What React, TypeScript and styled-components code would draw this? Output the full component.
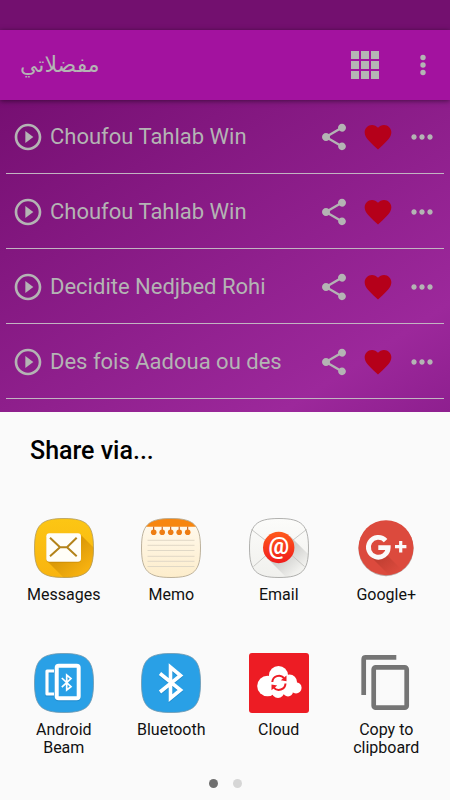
import React from "react";
import styled, { createGlobalStyle } from "styled-components";

const GlobalStyle = createGlobalStyle`
  *, *::before, *::after { box-sizing: border-box; }
  body {
    margin: 0;
    background: #fafafa;
    font-family: Roboto, "Liberation Sans", sans-serif;
  }
`;

const Page = styled.div`
  display: flex;
  flex-direction: column;
  min-height: 100vh;
`;

const StatusBar = styled.div`
  height: 30px;
  background: #73106f;
`;

const AppBar = styled.header`
  position: relative;
  z-index: 1;
  display: flex;
  align-items: center;
  height: 70px;
  padding: 0 6px 0 20px;
  background: #a3129f;
  color: #b4b4b4;
  box-shadow: 0 1px 5px rgba(0, 0, 0, 0.5);
`;

const BarTitle = styled.h1`
  flex: 1;
  margin: 0;
  font-family: "DejaVu Sans", sans-serif;
  font-size: 22px;
  line-height: 32px;
  font-weight: 400;
`;

const IconButton = styled.button`
  display: flex;
  align-items: center;
  justify-content: center;
  flex: none;
  padding: 0;
  border: 0;
  background: none;
  color: inherit;
  cursor: pointer;
`;

const BarButton = styled(IconButton)<{ $width: number }>`
  width: ${(p) => p.$width}px;
  height: 44px;
`;

const SongArea = styled.main`
  flex: 1;
  padding: 0 6px 13px;
  background: linear-gradient(147deg, #760f72 0%, #9c289b 82%, #8e1f8f 100%);
`;

const SongList = styled.ul`
  display: flex;
  flex-direction: column;
  gap: 1px;
  margin: 0;
  padding: 0;
  list-style: none;
`;

const SongRow = styled.li`
  display: flex;
  align-items: center;
  height: 74px;
  padding: 0 6px;
  border-bottom: 1px solid #c2b4c2;
  color: #b4b4b4;
`;

const SongName = styled.span`
  flex: 1;
  min-width: 0;
  margin-left: 6px;
  overflow: hidden;
  font-size: 22px;
  line-height: 30px;
  white-space: nowrap;
`;

const SongActions = styled.div`
  display: flex;
  gap: 12px;
`;

const HeartButton = styled(IconButton)`
  color: #b5001a;
`;

const Sheet = styled.section`
  padding: 23px 10px 12px;
  background: #fafafa;
  color: #111;
`;

const SheetTitle = styled.h2`
  margin: 0 20px 51px;
  color: #000;
  font-size: 25px;
  line-height: 32px;
  font-weight: 500;
`;

const TargetGrid = styled.div`
  display: grid;
  grid-template-columns: repeat(4, 1fr);
  align-items: start;
  row-gap: 49px;
`;

const Target = styled.button`
  display: flex;
  flex-direction: column;
  align-items: center;
  gap: 8px;
  padding: 0 8px;
  border: 0;
  background: none;
  color: inherit;
  font-family: inherit;
  font-size: 16px;
  line-height: 18px;
  text-align: center;
  cursor: pointer;
`;

const Pager = styled.nav`
  display: flex;
  justify-content: center;
  gap: 15px;
  margin-top: 22px;
`;

const PageDot = styled.button<{ $active?: boolean }>`
  width: 9px;
  height: 9px;
  padding: 0;
  border: 0;
  border-radius: 50%;
  background: ${(p) => (p.$active ? "#6f6f6f" : "#d6d6d6")};
  cursor: pointer;
`;

const Glyph = ({ d }: { d: string }) => (
  <svg width="32" height="32" viewBox="0 0 24 24" fill="currentColor" aria-hidden="true">
    <path d={d} />
  </svg>
);

const PLAY =
  "M10 16.5l6-4.5-6-4.5v9zM12 2C6.48 2 2 6.48 2 12s4.48 10 10 10 10-4.48 10-10S17.52 2 12 2zm0 18c-4.41 0-8-3.59-8-8s3.59-8 8-8 8 3.59 8 8-3.59 8-8 8z";
const SHARE =
  "M18 16.08c-.76 0-1.44.3-1.96.77L8.91 12.7c.05-.23.09-.46.09-.7s-.04-.47-.09-.7l7.05-4.11c.54.5 1.25.81 2.04.81 1.66 0 3-1.34 3-3s-1.34-3-3-3-3 1.34-3 3c0 .24.04.47.09.7L8.04 9.81C7.5 9.31 6.79 9 6 9c-1.66 0-3 1.34-3 3s1.34 3 3 3c.79 0 1.5-.31 2.04-.81l7.12 4.16c-.05.21-.08.43-.08.65 0 1.61 1.31 2.92 2.92 2.92s2.92-1.31 2.92-2.92-1.31-2.92-2.92-2.92z";
const HEART =
  "M12 21.35l-1.45-1.32C5.4 15.36 2 12.28 2 8.5 2 5.42 4.42 3 7.5 3c1.74 0 3.41.81 4.5 2.09C13.09 3.81 14.76 3 16.5 3 19.58 3 22 5.42 22 8.5c0 3.78-3.4 6.86-8.55 11.54L12 21.35z";
const MORE =
  "M6 10c-1.1 0-2 .9-2 2s.9 2 2 2 2-.9 2-2-.9-2-2-2zm12 0c-1.1 0-2 .9-2 2s.9 2 2 2 2-.9 2-2-.9-2-2-2zm-6 0c-1.1 0-2 .9-2 2s.9 2 2 2 2-.9 2-2-.9-2-2-2z";

const SQUIRCLE =
  "M30 .5C53 .5 59.5 7 59.5 30S53 59.5 30 59.5 .5 53 .5 30 7 .5 30 .5Z";

const Art = ({ children }: { children: React.ReactNode }) => (
  <svg width="60" height="60" viewBox="0 0 60 60" fill="none" aria-hidden="true">
    {children}
  </svg>
);

const MessagesArt = () => (
  <Art>
    <defs>
      <linearGradient id="msgFill" x1="0" y1="0" x2="0" y2="1">
        <stop offset="0" stopColor="#fcc614" />
        <stop offset="1" stopColor="#f9b40f" />
      </linearGradient>
      <linearGradient id="msgShade" x1="22" y1="22" x2="50" y2="54" gradientUnits="userSpaceOnUse">
        <stop offset="0.4" stopColor="#dc9a08" />
        <stop offset="1" stopColor="#f7b210" />
      </linearGradient>
      <clipPath id="msgClip"><path d={SQUIRCLE} /></clipPath>
    </defs>
    <path d={SQUIRCLE} fill="url(#msgFill)" />
    <path d="M46 16L62 32V62H32L13 43Z" fill="url(#msgShade)" clipPath="url(#msgClip)" />
    <path d={SQUIRCLE} stroke="#b09a60" strokeWidth="0.8" />
    <rect x="12.3" y="16" width="34.7" height="28.4" rx="3" fill="#a87000" opacity="0.5" />
    <rect x="12.3" y="15.3" width="34.7" height="28.4" rx="3" fill="#fffef8" />
    <path d="M16 19.7L26 29.3H33L42.7 19.7M16 38.3L26 29.3M33 29.3L42.7 38.3" stroke="#b3831a" strokeWidth="2" />
  </Art>
);

const MemoArt = () => (
  <Art>
    <defs>
      <linearGradient id="memoFill" x1="0" y1="0" x2="0" y2="1">
        <stop offset="0" stopColor="#fffaf0" />
        <stop offset="1" stopColor="#fdedcb" />
      </linearGradient>
      <clipPath id="memoClip"><path d={SQUIRCLE} /></clipPath>
    </defs>
    <path d={SQUIRCLE} fill="url(#memoFill)" />
    <path d="M0 0H60V8.7H0Z" fill="#f7860f" clipPath="url(#memoClip)" />
    <path d="M6.5 22.3H53.5M6.5 27.3H53.5M6.5 32.5H53.5M6.5 38.3H53.5M6.5 43.3H53.5M6.5 48.5H53.5" stroke="#e0d8c6" />
    {[12.7, 21.2, 29.7, 38.2, 46.7].map((x) => (
      <g key={x}>
        <path d={`M${x} 8.7V13`} stroke="#b84a08" strokeWidth="1" />
        <circle cx={x} cy="14.2" r="2.8" fill="#ee7d12" />
      </g>
    ))}
    <path d={SQUIRCLE} stroke="#b5aa94" strokeWidth="0.9" />
  </Art>
);

const EmailArt = () => (
  <Art>
    <defs>
      <linearGradient id="mailFill" x1="0" y1="0" x2="0" y2="1">
        <stop offset="0" stopColor="#fcfcfa" />
        <stop offset="1" stopColor="#f0f0ed" />
      </linearGradient>
      <linearGradient id="mailDisc" x1="0" y1="0" x2="0" y2="1">
        <stop offset="0" stopColor="#ff5a1c" />
        <stop offset="1" stopColor="#f01c1c" />
      </linearGradient>
      <linearGradient id="mailShade" x1="30" y1="30" x2="50" y2="52" gradientUnits="userSpaceOnUse">
        <stop offset="0.3" stopColor="#cfcfcd" />
        <stop offset="1" stopColor="#f1f1ee" />
      </linearGradient>
      <clipPath id="mailClip"><path d={SQUIRCLE} /></clipPath>
    </defs>
    <path d={SQUIRCLE} fill="url(#mailFill)" />
    <path d="M41 18L62 39V62H40L18 40Z" fill="url(#mailShade)" clipPath="url(#mailClip)" />
    <path d="M2.5 11.5L30 33 57.5 11.5M4.5 48.5L22 33M55.5 48.5L38 33" stroke="#c3c3c0" strokeWidth="0.9" />
    <path d={SQUIRCLE} stroke="#a8a8a6" strokeWidth="0.9" />
    <circle cx="29.7" cy="29.5" r="15.7" fill="url(#mailDisc)" />
    <text x="29.7" y="35.5" fill="#fff" fontFamily="Roboto, sans-serif" fontSize="23" fontWeight="700" textAnchor="middle">
      @
    </text>
  </Art>
);

const GooglePlusArt = () => (
  <Art>
    <defs>
      <clipPath id="plusClip"><circle cx="30" cy="29.7" r="27.5" /></clipPath>
      <linearGradient id="plusShade" x1="20" y1="30" x2="40" y2="55" gradientUnits="userSpaceOnUse">
        <stop offset="0" stopColor="#b53a2d" />
        <stop offset="1" stopColor="#dc4a3d" />
      </linearGradient>
    </defs>
    <circle cx="30" cy="30.6" r="27.6" fill="#b9a6a4" />
    <circle cx="30" cy="29.7" r="27.5" fill="#dc4a3d" />
    <path d="M31 37L56 62H38L14 38Z" fill="url(#plusShade)" clipPath="url(#plusClip)" />
    <path d="M29.6 22.6A9.9 9.9 0 1 0 32.2 29.6H22.3" stroke="#fafafa" strokeWidth="4.8" />
    <path d="M44.7 23V34.4M39 28.7H50.4" stroke="#fafafa" strokeWidth="3.2" />
  </Art>
);

const BeamArt = () => (
  <Art>
    <path d={SQUIRCLE} fill="#29a0e6" stroke="#6e97ad" strokeWidth="0.8" />
    <g stroke="#1879b8" opacity="0.55">
      <path d="M20 19H13V42H20" strokeWidth="3.2" />
      <rect x="22.7" y="13.7" width="22" height="32.5" rx="2" strokeWidth="4" />
    </g>
    <path d="M20 18H13V41H20" stroke="#fff" strokeWidth="3.2" strokeLinejoin="round" />
    <rect x="22.7" y="12.8" width="22" height="32.5" rx="2" fill="#29a0e6" stroke="#fff" strokeWidth="4" />
    <path d="M27.8 25L37 33.6 32.7 37V22L37 25.6 27.8 34.2" stroke="#fff" strokeWidth="1.7" />
  </Art>
);

const BluetoothArt = () => (
  <Art>
    <path d={SQUIRCLE} fill="#29a0e6" stroke="#6e97ad" strokeWidth="0.8" />
    <path d="M19 21.5L39.5 38 29.5 46.2V15.2L39.5 23.5 19 40" stroke="#1879b8" strokeWidth="3.6" opacity="0.55" />
    <path d="M19 20.5L39.5 37 29.5 45.2V14.2L39.5 22.5 19 39" stroke="#fff" strokeWidth="3.6" />
  </Art>
);

const CloudArt = () => (
  <Art>
    <rect width="60" height="60" rx="3" fill="#ed1c24" />
    <g fill="#fff">
      <circle cx="29.5" cy="22.6" r="9.6" />
      <circle cx="18.5" cy="33" r="10.3" />
      <circle cx="40.5" cy="29" r="7.5" />
      <circle cx="47" cy="34.8" r="5.6" />
      <circle cx="29" cy="38.5" r="6.4" />
      <circle cx="39" cy="38.5" r="5" />
      <rect x="20" y="24" width="22" height="16" />
    </g>
    <path d="M23.3 29A6.7 6.7 0 0 1 35 25M36.5 30.5A6.7 6.7 0 0 1 24.6 34.4" stroke="#ed1c24" strokeWidth="2" />
    <path d="M37.5 22.5V28.3L31.8 27.2ZM22.5 37.2V31.4L28.2 32.6Z" fill="#ed1c24" />
  </Art>
);

const CopyArt = () => (
  <Art>
    <path d="M7.7 42V6.3Q7.7 4.4 9.7 4.4H40.3" stroke="#757575" strokeWidth="4.7" />
    <rect x="17.7" y="14.3" width="33" height="40.4" rx="2" stroke="#757575" strokeWidth="4.7" />
  </Art>
);

const songs = [
  "Choufou Tahlab Win",
  "Choufou Tahlab Win",
  "Decidite Nedjbed Rohi",
  "Des fois Aadoua ou des",
];

const targets = [
  { label: "Messages", Icon: MessagesArt },
  { label: "Memo", Icon: MemoArt },
  { label: "Email", Icon: EmailArt },
  { label: "Google+", Icon: GooglePlusArt },
  { label: "Android Beam", Icon: BeamArt },
  { label: "Bluetooth", Icon: BluetoothArt },
  { label: "Cloud", Icon: CloudArt },
  { label: "Copy to clipboard", Icon: CopyArt },
];

export default function App() {
  return (
    <>
      <GlobalStyle />
      <Page>
        <StatusBar />
        <AppBar>
          <BarTitle lang="ar">مفضلاتي</BarTitle>
          <BarButton $width={72} aria-label="Grid view">
            <svg width="28" height="28" viewBox="0 0 28 28" fill="currentColor" aria-hidden="true">
              {[0, 10, 20].map((y) =>
                [0, 10, 20].map((x) => <rect key={`${x}-${y}`} x={x} y={y} width="8" height="8" />)
              )}
            </svg>
          </BarButton>
          <BarButton $width={43} aria-label="More options">
            <svg width="6" height="22" viewBox="0 0 6 22" fill="currentColor" aria-hidden="true">
              <circle cx="3" cy="3.5" r="2.7" />
              <circle cx="3" cy="11" r="2.7" />
              <circle cx="3" cy="18.5" r="2.7" />
            </svg>
          </BarButton>
        </AppBar>
        <SongArea>
          <SongList>
            {songs.map((name, i) => (
              <SongRow key={i}>
                <IconButton aria-label={`Play ${name}`}><Glyph d={PLAY} /></IconButton>
                <SongName>{name}</SongName>
                <SongActions>
                  <IconButton aria-label={`Share ${name}`}><Glyph d={SHARE} /></IconButton>
                  <HeartButton aria-label={`Favourite ${name}`}><Glyph d={HEART} /></HeartButton>
                  <IconButton aria-label={`More for ${name}`}><Glyph d={MORE} /></IconButton>
                </SongActions>
              </SongRow>
            ))}
          </SongList>
        </SongArea>
        <Sheet role="dialog" aria-labelledby="share-title">
          <SheetTitle id="share-title">Share via...</SheetTitle>
          <TargetGrid>
            {targets.map(({ label, Icon }) => (
              <Target key={label}>
                <Icon />
                <span>{label}</span>
              </Target>
            ))}
          </TargetGrid>
          <Pager aria-label="Share pages">
            <PageDot $active aria-label="Page 1" />
            <PageDot aria-label="Page 2" />
          </Pager>
        </Sheet>
      </Page>
    </>
  );
}
